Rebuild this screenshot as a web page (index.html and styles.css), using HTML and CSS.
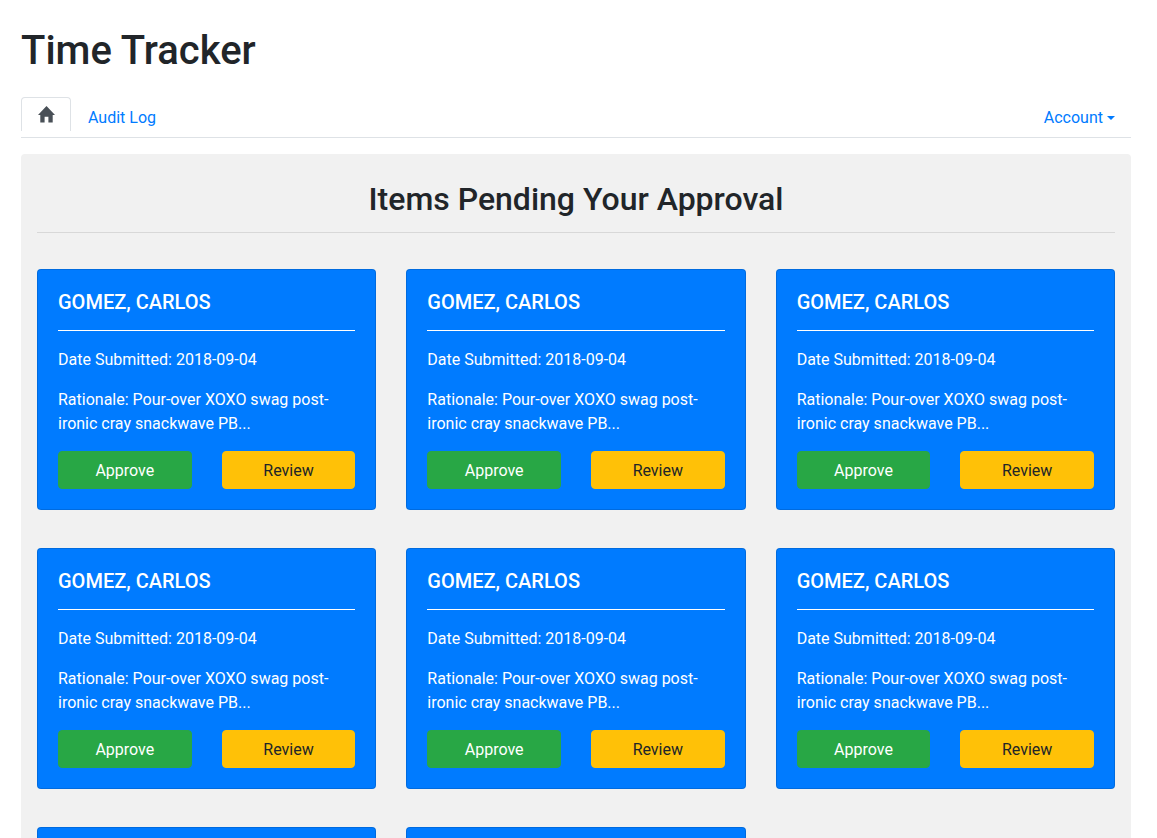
FILE: index.html
```html
<!DOCTYPE html>
<html lang="en">
<head>
<meta charset="utf-8">
<meta name="viewport" content="width=device-width, initial-scale=1">
<title>Time Tracker</title>
<link rel="stylesheet" href="styles.css">
</head>
<body>
<div class="container">
  <h1 class="page-title">Time Tracker</h1>
  <nav class="tabs">
    <a class="tab tab-active" href="#" aria-label="Home">
      <svg class="home-icon" viewBox="0 0 17 17" aria-hidden="true"><path d="M8.500 0 17 9H14.700V16.500H10.400V10.700H6.600V16.500H2.300V9H0Z"/></svg>
    </a>
    <a class="tab" href="#">Audit Log</a>
    <button class="tab account" type="button" aria-haspopup="true">Account</button>
  </nav>
  <main class="panel">
    <h2 class="panel-title">Items Pending Your Approval</h2>
    <hr class="rule">
    <div class="cards">
      <article class="card">
        <h3 class="card-title">GOMEZ, CARLOS</h3>
        <hr class="card-rule">
        <p class="card-text">Date Submitted: 2018-09-04</p>
        <p class="card-text">Rationale: Pour-over XOXO swag post-ironic cray snackwave PB...</p>
        <div class="actions"><button class="btn approve" type="button">Approve</button><button class="btn review" type="button">Review</button></div>
      </article>
      <article class="card">
        <h3 class="card-title">GOMEZ, CARLOS</h3>
        <hr class="card-rule">
        <p class="card-text">Date Submitted: 2018-09-04</p>
        <p class="card-text">Rationale: Pour-over XOXO swag post-ironic cray snackwave PB...</p>
        <div class="actions"><button class="btn approve" type="button">Approve</button><button class="btn review" type="button">Review</button></div>
      </article>
      <article class="card">
        <h3 class="card-title">GOMEZ, CARLOS</h3>
        <hr class="card-rule">
        <p class="card-text">Date Submitted: 2018-09-04</p>
        <p class="card-text">Rationale: Pour-over XOXO swag post-ironic cray snackwave PB...</p>
        <div class="actions"><button class="btn approve" type="button">Approve</button><button class="btn review" type="button">Review</button></div>
      </article>
      <article class="card">
        <h3 class="card-title">GOMEZ, CARLOS</h3>
        <hr class="card-rule">
        <p class="card-text">Date Submitted: 2018-09-04</p>
        <p class="card-text">Rationale: Pour-over XOXO swag post-ironic cray snackwave PB...</p>
        <div class="actions"><button class="btn approve" type="button">Approve</button><button class="btn review" type="button">Review</button></div>
      </article>
      <article class="card">
        <h3 class="card-title">GOMEZ, CARLOS</h3>
        <hr class="card-rule">
        <p class="card-text">Date Submitted: 2018-09-04</p>
        <p class="card-text">Rationale: Pour-over XOXO swag post-ironic cray snackwave PB...</p>
        <div class="actions"><button class="btn approve" type="button">Approve</button><button class="btn review" type="button">Review</button></div>
      </article>
      <article class="card">
        <h3 class="card-title">GOMEZ, CARLOS</h3>
        <hr class="card-rule">
        <p class="card-text">Date Submitted: 2018-09-04</p>
        <p class="card-text">Rationale: Pour-over XOXO swag post-ironic cray snackwave PB...</p>
        <div class="actions"><button class="btn approve" type="button">Approve</button><button class="btn review" type="button">Review</button></div>
      </article>
      <article class="card">
        <h3 class="card-title">GOMEZ, CARLOS</h3>
        <hr class="card-rule">
        <p class="card-text">Date Submitted: 2018-09-04</p>
        <p class="card-text">Rationale: Pour-over XOXO swag post-ironic cray snackwave PB...</p>
        <div class="actions"><button class="btn approve" type="button">Approve</button><button class="btn review" type="button">Review</button></div>
      </article>
      <article class="card">
        <h3 class="card-title">GOMEZ, CARLOS</h3>
        <hr class="card-rule">
        <p class="card-text">Date Submitted: 2018-09-04</p>
        <p class="card-text">Rationale: Pour-over XOXO swag post-ironic cray snackwave PB...</p>
        <div class="actions"><button class="btn approve" type="button">Approve</button><button class="btn review" type="button">Review</button></div>
      </article>
    </div>
  </main>
</div>
</body>
</html>
```
FILE: styles.css
```css
*, *::before, *::after {
  box-sizing: border-box;
}

body {
  margin: 0;
  background: #fff;
  color: #212529;
  font-family: Roboto, "Liberation Sans", sans-serif;
  font-size: 16px;
  line-height: 24px;
}

h1, h2, h3, p, hr {
  margin: 0;
}

h1, h2, h3 {
  font-weight: 500;
}

button {
  font: inherit;
  cursor: pointer;
}

.container {
  padding: 27px 26px 16px 21px;
}

.page-title {
  margin-bottom: 22px;
  font-size: 40px;
  line-height: 48px;
}

.tabs {
  display: flex;
  align-items: flex-start;
  margin-bottom: 16px;
  border-bottom: 1px solid #dee2e6;
}

.tab {
  padding: 8px 16px 7px;
  border: 1px solid transparent;
  border-bottom: 0;
  border-radius: 4px 4px 0 0;
  background: none;
  color: #007bff;
  text-decoration: none;
}

.tab-active {
  padding: 8px 15px 8px 16px;
  border-color: #dee2e6;
  background: #fff;
  color: #495057;
}

.home-icon {
  display: block;
  width: 17px;
  height: 17px;
  fill: currentColor;
}

.account {
  display: flex;
  align-items: center;
  gap: 4px;
  margin-left: auto;
  padding-right: 15px;
}

.account::after {
  content: "";
  border-top: 4px solid;
  border-right: 4px solid transparent;
  border-left: 4px solid transparent;
}

.panel {
  padding: 26px 16px 16px;
  border-radius: 4px;
  background: #f1f1f1;
}

.panel-title {
  margin-bottom: 14px;
  font-size: 32px;
  line-height: 38px;
  text-align: center;
}

.rule {
  border: 0;
  border-top: 1px solid rgba(0, 0, 0, 0.1);
}

.cards {
  display: grid;
  grid-template-columns: repeat(auto-fill, minmax(300px, 1fr));
  gap: 38px 30px;
  margin-top: 36px;
}

.card {
  padding: 20px;
  border: 1px solid rgba(0, 0, 0, 0.125);
  border-radius: 4px;
  background: #007bff;
  color: #fff;
}

.card-title {
  font-size: 20px;
  line-height: 24px;
}

.card-rule {
  margin: 16px 0 17px;
  border: 0;
  border-top: 1px solid #fff;
}

.card-text {
  margin-bottom: 16px;
}

.card-text + .card-text {
  margin-bottom: 15px;
}

.actions {
  display: grid;
  grid-template-columns: 1fr 1fr;
  gap: 30px;
}

.btn {
  padding: 7px 12px 5px;
  border: 1px solid transparent;
  border-radius: 4px;
}

.approve {
  border-color: #28a745;
  background: #28a745;
  color: #fff;
}

.review {
  border-color: #ffc107;
  background: #ffc107;
  color: #212529;
}
```
